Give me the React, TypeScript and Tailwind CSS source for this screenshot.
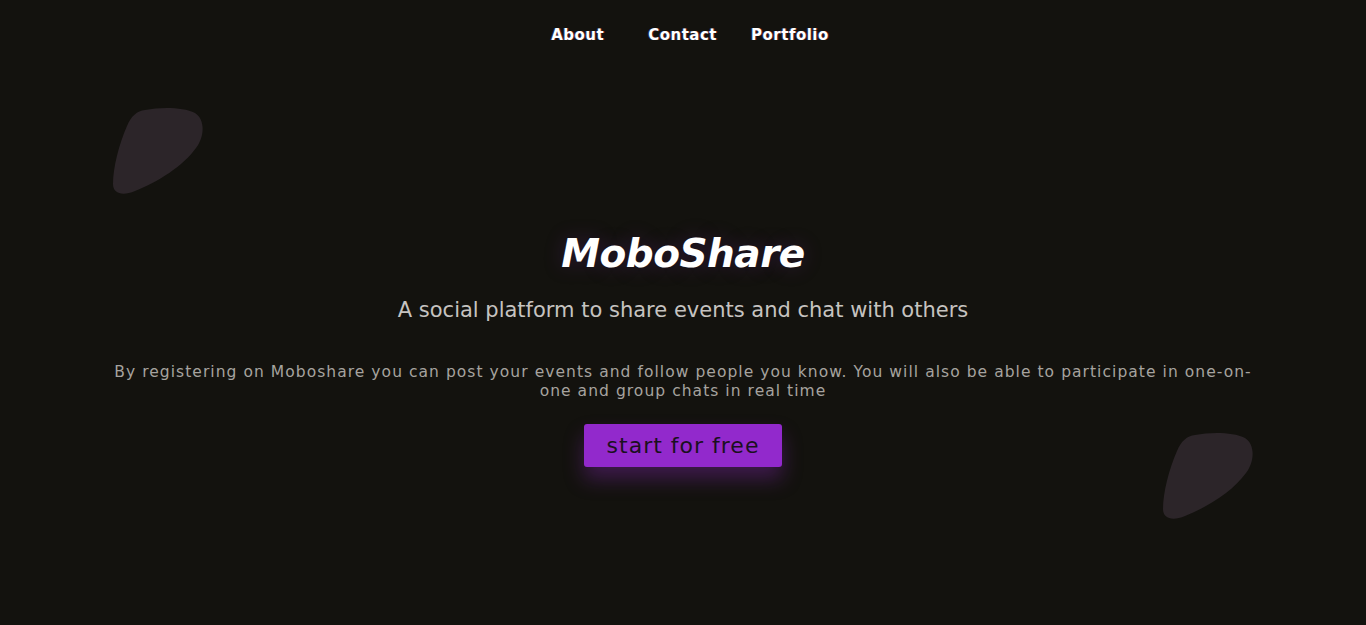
export default function App() {
  return (
    <div
      className="min-h-[625px] w-full bg-[#13120e] text-white overflow-hidden"
      style={{ fontFamily: '"DejaVu Sans", "Open Sans", sans-serif' }}
    >
      <nav className="flex justify-center pt-[26px] h-[108px]">
        <ul className="flex items-start text-[15px] font-black leading-[18px] tracking-[0.5px] [text-shadow:1px_0_0_rgba(255,60,60,0.35),-1px_0_0_rgba(60,120,255,0.35)]">
          <li className="ml-[14px] mr-[44px]">
            <a href="#">About</a>
          </li>
          <li className="mr-[34px]">
            <a href="#">Contact</a>
          </li>
          <li>
            <a href="#">Portfolio</a>
          </li>
        </ul>
      </nav>

      <div className="flex px-[113px]">
        <Blob />
      </div>

      <main className="flex flex-col items-center mt-[36px]">
        <h1 className="text-[39px] font-bold italic leading-[48px] tracking-[-0.5px] [text-shadow:0_0_20px_rgba(110,40,150,0.3)]">
          MoboShare
        </h1>
        <h2 className="mt-[20px] text-[21px] leading-[24px] text-[#c6c3c0]">
          A social platform to share events and chat with others
        </h2>
        <p className="mt-[41px] w-[85%] text-center text-[15.5px] leading-[19px] tracking-[1.05px] text-[#a6a39f]">
          By registering on Moboshare you can post your events and follow people you know. You will also be able to participate in one-on-one and group chats in real time
        </p>
        <button className="mt-[23px] h-[43px] w-[198px] rounded-[3px] bg-[#9229cc] text-[22px] tracking-[1px] text-[#1a1020] shadow-[0_12px_20px_rgba(140,40,190,0.35)]">
          start for free
        </button>
      </main>

      <div className="flex justify-end pr-[113px] -mt-[34px]">
        <Blob />
      </div>
    </div>
  )
}

function Blob() {
  return (
    <svg width="90" height="86" viewBox="0 0 90 86">
      <path
        d="M32 2 C48 -1 70 -1 82 5 C93 12 91 30 83 40 C70 58 45 74 22 83 C10 88 0 86 0 76 C0 60 6 36 14 18 C18 8 24 3 32 2 Z"
        fill="#2c2529"
      />
    </svg>
  )
}
